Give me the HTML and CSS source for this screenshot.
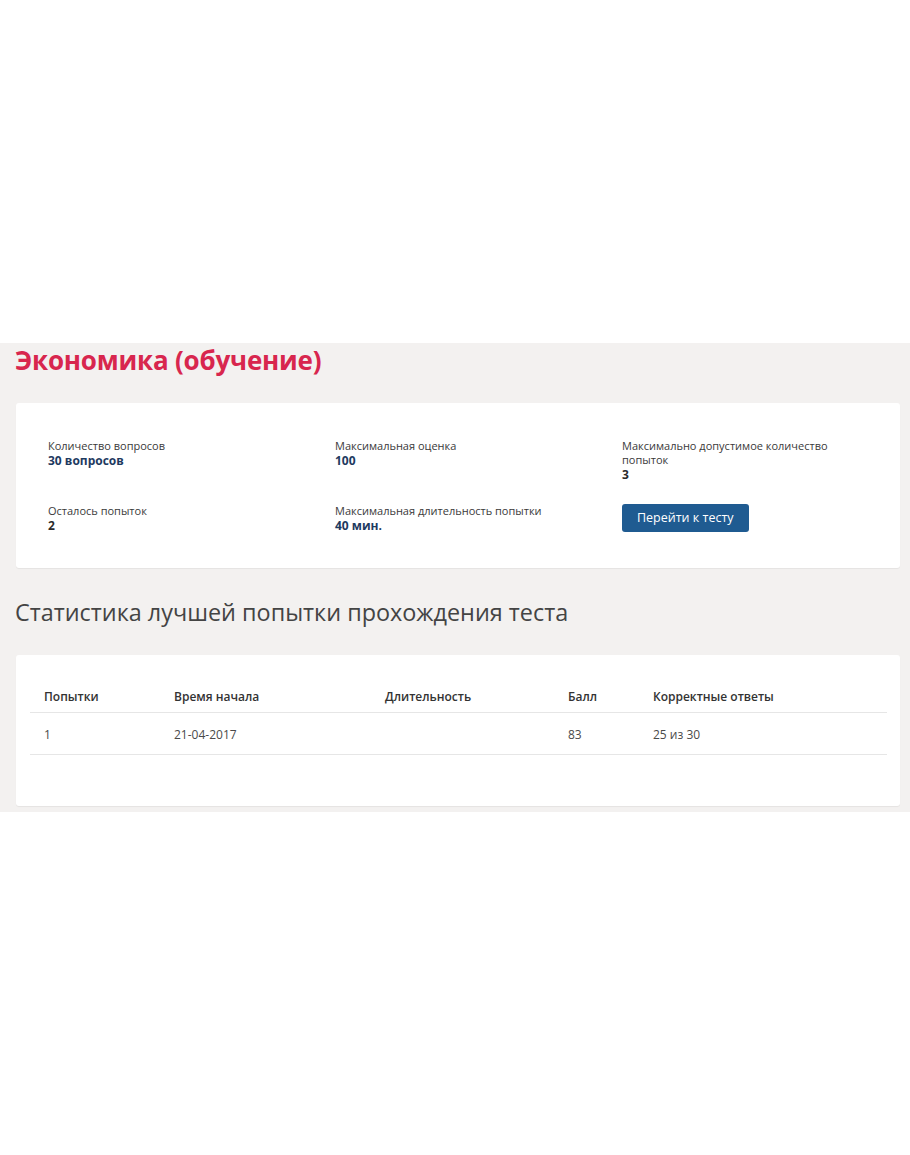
FILE: index.html
```html
<!DOCTYPE html>
<html lang="ru">
<head>
<meta charset="utf-8">
<title>Экономика (обучение)</title>
<link rel="stylesheet" href="styles.css">
</head>
<body>
<div class="page">
  <section class="band">
    <h1 class="title">Экономика (обучение)</h1>

    <div class="card info">
      <div class="info-grid">
        <div class="item">
          <div class="label">Количество вопросов</div>
          <div class="value accent">30 вопросов</div>
        </div>
        <div class="item">
          <div class="label">Максимальная оценка</div>
          <div class="value accent">100</div>
        </div>
        <div class="item">
          <div class="label">Максимально допустимое количество попыток</div>
          <div class="value">3</div>
        </div>
        <div class="item">
          <div class="label">Осталось попыток</div>
          <div class="value">2</div>
        </div>
        <div class="item">
          <div class="label">Максимальная длительность попытки</div>
          <div class="value accent">40 мин.</div>
        </div>
        <div class="item">
          <button class="btn" type="button">Перейти к тесту</button>
        </div>
      </div>
    </div>

    <h2 class="subtitle">Статистика лучшей попытки прохождения теста</h2>

    <div class="card stats">
      <table class="table">
        <colgroup>
          <col class="c1"><col class="c2"><col class="c3"><col class="c4"><col class="c5">
        </colgroup>
        <thead>
          <tr>
            <th>Попытки</th>
            <th>Время начала</th>
            <th>Длительность</th>
            <th>Балл</th>
            <th>Корректные ответы</th>
          </tr>
        </thead>
        <tbody>
          <tr>
            <td>1</td>
            <td>21-04-2017</td>
            <td></td>
            <td>83</td>
            <td>25 из 30</td>
          </tr>
        </tbody>
      </table>
    </div>
  </section>
</div>
</body>
</html>
```

FILE: styles.css
```css
html, body {
  margin: 0;
  padding: 0;
  background: #ffffff;
}

body {
  font-family: "Open Sans", "Noto Sans", "DejaVu Sans", sans-serif;
  color: #333333;
}

.page {
  padding-top: 343px;
  min-height: 1155px;
  box-sizing: border-box;
}

.band {
  background: #f3f1f0;
  padding: 1px 10px 6px 16px;
}

.title {
  margin: 0 0 0 -1px;
  font-family: "Open Sans", "Noto Sans", sans-serif;
  font-size: 26px;
  font-weight: 700;
  line-height: 32px;
  color: #d8264e;
  letter-spacing: -0.2px;
}

.card {
  background: #ffffff;
  border-radius: 3px;
  box-shadow: 0 1px 1px rgba(0, 0, 0, 0.06);
}

.info {
  margin-top: 27px;
  padding: 36px 32px 35px 32px;
}

.info-grid {
  display: grid;
  grid-template-columns: 246px 246px 246px;
  column-gap: 41px;
  row-gap: 22px;
}

.label {
  font-size: 11px;
  line-height: 14px;
  color: #3a3a3a;
}

.value {
  font-size: 12px;
  line-height: 15px;
  font-weight: 700;
  color: #2b2b2b;
}

.value.accent {
  color: #1e3a5f;
}

.btn {
  display: inline-block;
  height: 28px;
  padding: 0 15px;
  border: none;
  border-radius: 3px;
  background: #1f5b91;
  color: #ffffff;
  font-family: "Open Sans", "Noto Sans", sans-serif;
  font-size: 12.5px;
  line-height: 28px;
  cursor: pointer;
}

.subtitle {
  margin: 30px 0 29px -1px;
  font-family: "Open Sans", "Noto Sans", sans-serif;
  font-size: 23.4px;
  font-weight: 400;
  line-height: 28px;
  color: #444444;
}

.stats {
  padding: 25px 13px 51px 14px;
}

.table {
  width: 100%;
  border-collapse: collapse;
  table-layout: fixed;
  font-size: 12px;
}

.c1 { width: 130px; }
.c2 { width: 211px; }
.c3 { width: 183px; }
.c4 { width: 85px; }

.table th {
  text-align: left;
  font-weight: 600;
  color: #333333;
  height: 32px;
  padding: 0 14px;
  border-bottom: 1px solid #e6e6e6;
  vertical-align: middle;
}

.table td {
  height: 40px;
  padding: 1px 14px 0 14px;
  color: #4a4a4a;
  border-bottom: 1px solid #e6e6e6;
  vertical-align: middle;
}
```
